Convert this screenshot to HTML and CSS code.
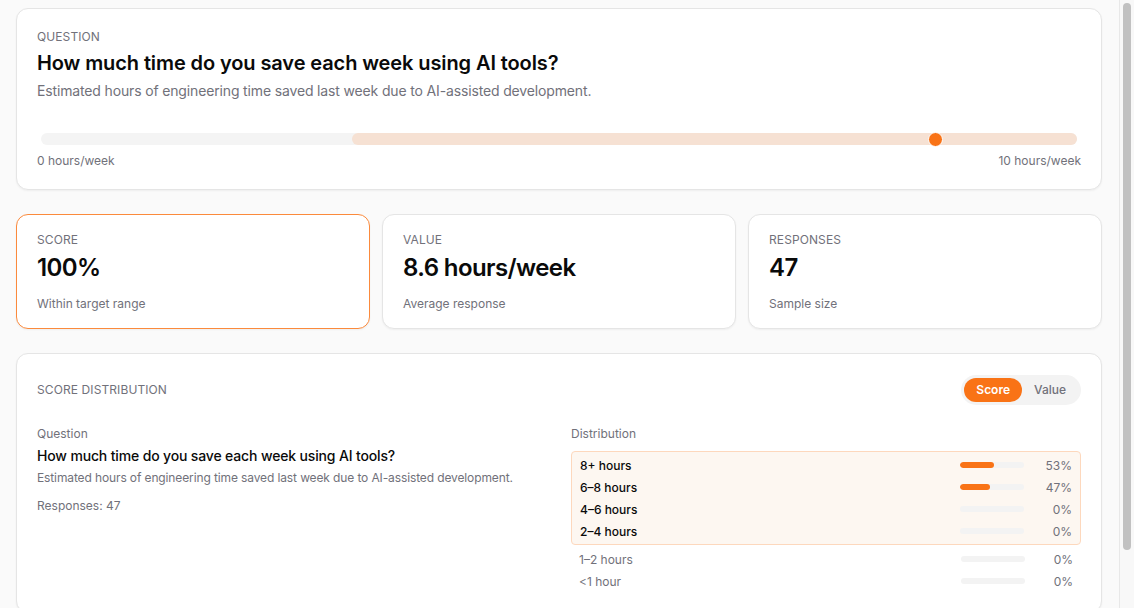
FILE: index.html
```html
<!DOCTYPE html>
<html lang="en">
<head>
<meta charset="utf-8">
<title>Question score</title>
<link rel="stylesheet" href="styles.css">
</head>
<body>
<main class="page">
  <section class="card question-card">
    <div class="eyebrow">QUESTION</div>
    <h1 class="q-title">How much time do you save each week using AI tools?</h1>
    <p class="q-desc">Estimated hours of engineering time saved last week due to AI-assisted development.</p>
    <div class="slider">
      <div class="track">
        <div class="range" style="left:30%;width:70%"></div>
        <div class="thumb" style="left:86.3%"></div>
      </div>
      <div class="slider-labels">
        <span>0 hours/week</span>
        <span>10 hours/week</span>
      </div>
    </div>
  </section>

  <section class="stats">
    <div class="card stat stat-active">
      <div class="eyebrow">SCORE</div>
      <div class="stat-value">100%</div>
      <div class="stat-sub">Within target range</div>
    </div>
    <div class="card stat">
      <div class="eyebrow">VALUE</div>
      <div class="stat-value">8.6 hours/week</div>
      <div class="stat-sub">Average response</div>
    </div>
    <div class="card stat">
      <div class="eyebrow">RESPONSES</div>
      <div class="stat-value">47</div>
      <div class="stat-sub">Sample size</div>
    </div>
  </section>

  <section class="card dist-card">
    <div class="dist-head">
      <div class="eyebrow">SCORE DISTRIBUTION</div>
      <div class="toggle">
        <span class="toggle-btn toggle-on">Score</span>
        <span class="toggle-btn">Value</span>
      </div>
    </div>
    <div class="dist-body">
      <div class="dist-left">
        <div class="col-label">Question</div>
        <div class="dl-title">How much time do you save each week using AI tools?</div>
        <div class="dl-desc">Estimated hours of engineering time saved last week due to AI-assisted development.</div>
        <div class="dl-resp">Responses: 47</div>
      </div>
      <div class="dist-right">
        <div class="col-label">Distribution</div>
        <div class="target-box">
          <div class="row row-hi"><span class="row-label">8+ hours</span><span class="bar"><span class="fill" style="width:53%"></span></span><span class="pct">53%</span></div>
          <div class="row row-hi"><span class="row-label">6–8 hours</span><span class="bar"><span class="fill" style="width:47%"></span></span><span class="pct">47%</span></div>
          <div class="row row-hi"><span class="row-label">4–6 hours</span><span class="bar"><span class="fill" style="width:0%"></span></span><span class="pct">0%</span></div>
          <div class="row row-hi"><span class="row-label">2–4 hours</span><span class="bar"><span class="fill" style="width:0%"></span></span><span class="pct">0%</span></div>
        </div>
        <div class="rest">
          <div class="row"><span class="row-label">1–2 hours</span><span class="bar"><span class="fill" style="width:0%"></span></span><span class="pct">0%</span></div>
          <div class="row"><span class="row-label">&lt;1 hour</span><span class="bar"><span class="fill" style="width:0%"></span></span><span class="pct">0%</span></div>
        </div>
      </div>
    </div>
  </section>
</main>
<aside class="scrollbar" aria-hidden="true"><div class="scroll-thumb"></div></aside>
</body>
</html>
```
FILE: styles.css
```css
* {
  box-sizing: border-box;
}
body {
  margin: 0;
  display: flex;
  align-items: flex-start;
  background: #fafafa;
  font-family: Inter, "Noto Sans", "Liberation Sans", sans-serif;
  color: #0a0a0a;
}
.page {
  flex: 1;
  min-width: 0;
  padding: 8px 17px 66px 16px;
  display: flex;
  flex-direction: column;
  gap: 24px;
}
.scrollbar {
  position: sticky;
  top: 0;
  flex: 0 0 15px;
  width: 15px;
  height: 608px;
  padding-top: 3px;
  background: #f8f8f8;
  border-left: 1px solid #e8e8e8;
}
.scroll-thumb {
  width: 8px;
  height: 547px;
  margin-left: 3px;
  border-radius: 4px;
  background: #c1c1c1;
}
.card {
  background: #fff;
  border: 1px solid #e5e5e5;
  border-radius: 12px;
  box-shadow: 0 1px 2px rgba(0, 0, 0, 0.05);
}
.eyebrow {
  font-size: 12px;
  line-height: 16px;
  color: #71717a;
  letter-spacing: 0.1px;
}
.question-card {
  padding: 20px;
}
.q-title {
  margin: 4px 0 0;
  font-size: 20px;
  line-height: 28px;
  font-weight: 600;
  letter-spacing: -0.1px;
}
.q-desc {
  margin: 4px 0 0;
  font-size: 14px;
  line-height: 20px;
  color: #71717a;
  letter-spacing: -0.15px;
}
.slider {
  margin-top: 32px;
}
.track {
  position: relative;
  height: 12px;
  margin: 0 4px;
  border-radius: 6px;
  background: #f4f4f4;
}
.range {
  position: absolute;
  top: 0;
  bottom: 0;
  border-radius: 6px;
  background: #f6e1d3;
}
.thumb {
  position: absolute;
  top: 50%;
  width: 15px;
  height: 15px;
  margin: -7.5px 0 0 -7.5px;
  border-radius: 50%;
  background: #f97316;
  border: 1.5px solid #fff;
}
.slider-labels {
  display: flex;
  justify-content: space-between;
  margin-top: 8px;
  font-size: 12px;
  line-height: 16px;
  color: #71717a;
}
.stats {
  display: grid;
  grid-template-columns: repeat(3, 1fr);
  gap: 12px;
}
.stat {
  padding: 17px 20px 16px;
}
.stat-active {
  border: 1.5px solid #fb8a3c;
}
.stat-value {
  margin-top: 4px;
  font-size: 24px;
  line-height: 32px;
  font-weight: 600;
  letter-spacing: -0.6px;
}
.stat-sub {
  margin-top: 12px;
  font-size: 12px;
  line-height: 16px;
  color: #71717a;
}
.dist-card {
  padding: 21px 20px 20px;
}
.dist-head {
  display: flex;
  align-items: center;
  justify-content: space-between;
}
.toggle {
  display: flex;
  height: 30px;
  padding: 3px;
  border-radius: 999px;
  background: #f3f3f3;
}
.toggle-btn {
  padding: 0 12px;
  font-size: 12px;
  line-height: 24px;
  font-weight: 500;
  color: #71717a;
  border-radius: 999px;
}
.toggle-on {
  background: #f97316;
  color: #fff;
  font-weight: 600;
}
.dist-body {
  display: grid;
  grid-template-columns: 1fr 1fr;
  gap: 24px;
  margin-top: 21px;
}
.col-label {
  font-size: 12px;
  line-height: 16px;
  color: #71717a;
}
.dl-title {
  margin-top: 4px;
  font-size: 14px;
  line-height: 20px;
  font-weight: 500;
  letter-spacing: -0.15px;
}
.dl-desc {
  margin-top: 3px;
  font-size: 12px;
  line-height: 18px;
  color: #71717a;
  letter-spacing: -0.12px;
}
.dl-resp {
  margin-top: 10px;
  font-size: 12px;
  line-height: 18px;
  color: #71717a;
}
.target-box {
  margin-top: 9px;
  padding: 2px 8px;
  border: 1px solid #fdd8bd;
  border-radius: 4px;
  background: #fdf7f1;
}
.rest {
  margin-top: 3px;
  padding: 0 8px;
}
.row {
  display: grid;
  grid-template-columns: 1fr 64px 48px;
  align-items: center;
  height: 22px;
  font-size: 12px;
  color: #71717a;
}
.row-hi .row-label {
  color: #0a0a0a;
  font-weight: 500;
}
.bar {
  height: 6px;
  border-radius: 3px;
  background: #f3f3f3;
  overflow: hidden;
}
.fill {
  display: block;
  height: 100%;
  border-radius: 3px;
  background: #f97316;
}
.pct {
  text-align: right;
}
```
